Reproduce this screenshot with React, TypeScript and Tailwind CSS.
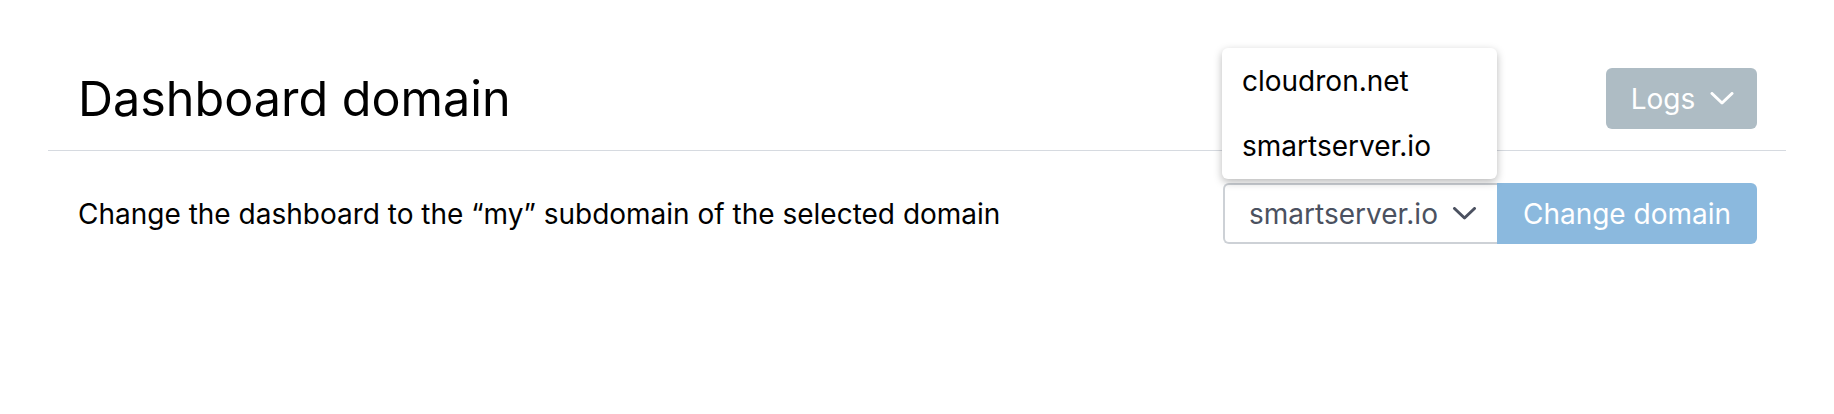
import React from "react";

function Chevron({ className }: { className?: string }) {
  return (
    <svg
      className={className}
      viewBox="0 0 24 13"
      fill="none"
      stroke="currentColor"
      strokeWidth={3}
      strokeLinecap="round"
      strokeLinejoin="round"
    >
      <polyline points="2,1.5 12,11 22,1.5" />
    </svg>
  );
}

const domains = ["cloudron.net", "smartserver.io"];

export default function App() {
  return (
    <div className="min-h-[414px] bg-white px-[48px] pt-[68px] font-['Inter',sans-serif] text-black">
      <div className="flex h-[61px] items-center justify-between pl-[30px] pr-[29px]">
        <h1 className="text-[48.5px] leading-[58px] font-normal">Dashboard domain</h1>
        <button className="flex h-[61px] w-[151px] items-center justify-center gap-[15px] rounded-[6px] bg-[#aebcc4] pl-[2px] text-[28px] leading-[34px] text-white">
          Logs
          <Chevron className="h-[13px] w-[24px]" />
        </button>
      </div>

      <div className="mt-[21px] h-px bg-[#d6dae0]" />

      <div className="mt-[32px] flex h-[61px] items-center justify-between pl-[30px] pr-[29px]">
        <p className="text-[28px] leading-[34px]">
          Change the dashboard to the “my” subdomain of the selected domain
        </p>
        <div className="relative flex">
          <div className="absolute bottom-full left-[-1px] z-10 mb-[4px] w-[275px] rounded-[6px] bg-white shadow-[0_3px_8px_rgba(0,0,0,0.28)]">
            {domains.map((d) => (
              <div key={d} className="flex h-[65.5px] items-center px-[20px] text-[28px] leading-[34px]">
                {d}
              </div>
            ))}
          </div>
          <div className="flex h-[61px] w-[274px] items-center justify-between rounded-l-[6px] border-2 border-r-0 border-[#cdd1d6] pl-[24px] pr-[20px] text-[28px] leading-[34px] text-[#4b5160]">
            smartserver.io
            <Chevron className="h-[13px] w-[25px]" />
          </div>
          <button className="h-[61px] w-[260px] rounded-r-[6px] bg-[#8bb9de] text-[28px] leading-[34px] text-white">
            Change domain
          </button>
        </div>
      </div>
    </div>
  );
}
